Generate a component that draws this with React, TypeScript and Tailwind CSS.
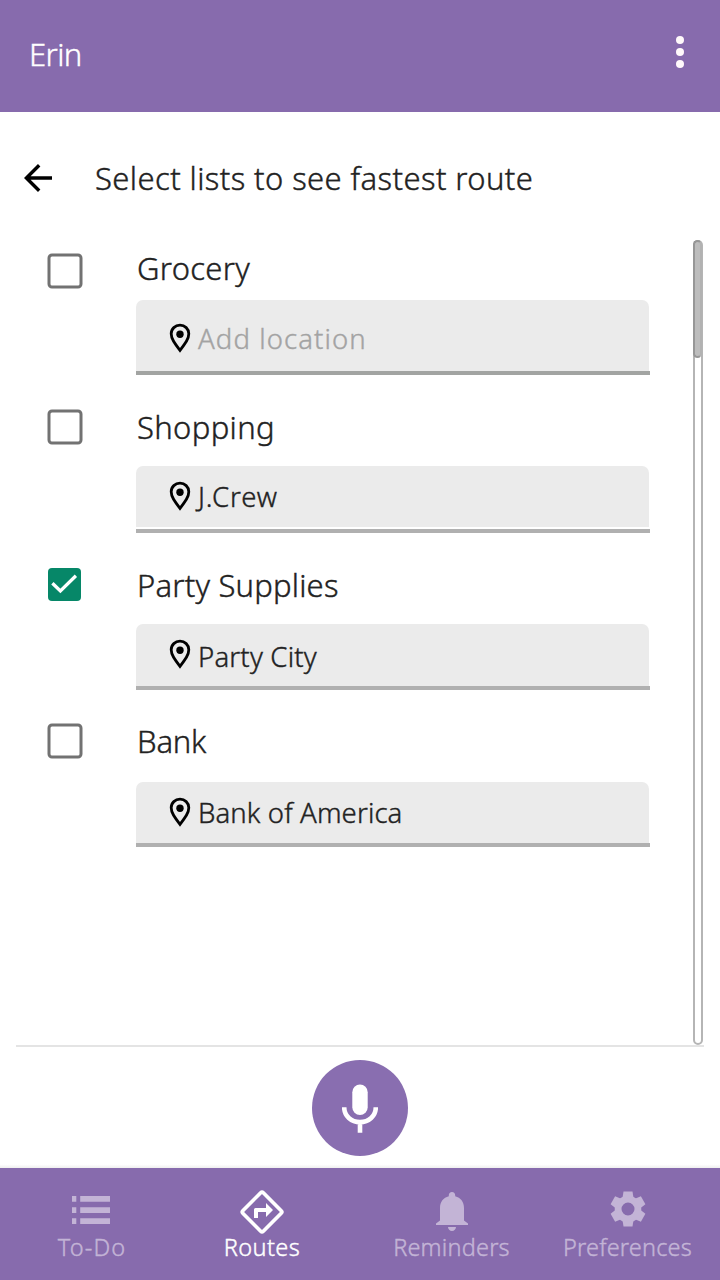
import type { ReactNode } from "react";

type ListItem = {
  name: string;
  nameClass: string;
  place: string;
  placeClass: string;
  checked?: boolean;
  rowClass: string;
  boxClass: string;
  labelClass: string;
  fieldClass: string;
  barClass: string;
};

const items: ListItem[] = [
  {
    name: "Grocery",
    nameClass: "tracking-[0.3px]",
    place: "Add location",
    placeClass: "tracking-[1.1px] text-[#a3a3a3] pt-[2px]",
    rowClass: "h-[158px]",
    boxClass: "pt-[13px]",
    labelClass: "h-[60px] pb-[3px]",
    fieldClass: "h-[71px] pt-[4px]",
    barClass: "bg-[#a2a4a2]",
  },
  {
    name: "Shopping",
    nameClass: "tracking-[0.35px]",
    place: "J.Crew",
    placeClass: "tracking-[0.9px] text-[#222] pt-[2px]",
    rowClass: "h-[158px]",
    boxClass: "pt-[11px]",
    labelClass: "h-[68px] pb-[10px]",
    fieldClass: "h-[61px] mb-[2px] pb-px",
    barClass: "bg-[#b0b0b0]",
  },
  {
    name: "Party Supplies",
    nameClass: "tracking-[0.2px]",
    place: "Party City",
    placeClass: "tracking-[0.2px] text-[#222] pt-[5px]",
    checked: true,
    rowClass: "h-[158px]",
    boxClass: "pt-[11px]",
    labelClass: "h-[68px] pb-[10px]",
    fieldClass: "h-[62px] pb-[2px]",
    barClass: "bg-[#b0b0b0]",
  },
  {
    name: "Bank",
    nameClass: "tracking-[-0.2px]",
    place: "Bank of America",
    placeClass: "tracking-[0.12px] text-[#222] pt-[2px]",
    rowClass: "h-[158px]",
    boxClass: "pt-[9px]",
    labelClass: "h-[68px] pb-[14px]",
    fieldClass: "h-[61px] pb-px",
    barClass: "bg-[#b0b0b0]",
  },
];

function Checkbox({ checked }: { checked?: boolean }) {
  return (
    <svg width="37" height="37" viewBox="0 0 37 37" role="checkbox" aria-checked={!!checked}>
      {checked ? (
        <>
          <rect x="1" y="1" width="33" height="33" rx="4" fill="#068768" />
          <path d="M5.4 16.2L13.4 23.9L28.9 8.8" fill="none" stroke="#fff" strokeWidth="3.3" />
        </>
      ) : (
        <rect x="2" y="2" width="32" height="32" rx="3" fill="#fff" stroke="#727272" strokeWidth="3" />
      )}
    </svg>
  );
}

function Pin() {
  return (
    <svg width="22" height="30" viewBox="0 0 22 30" className="shrink-0">
      <path
        d="M11 2.2C6.2 2.2 2.2 5.8 2.2 10.8C2.2 15.8 5.6 20.3 11 27.4C16.4 20.3 19.8 15.8 19.8 10.8C19.8 5.8 15.8 2.2 11 2.2Z"
        fill="none"
        stroke="#000"
        strokeWidth="2.8"
      />
      <circle cx="11" cy="11.2" r="3.7" />
    </svg>
  );
}

function Row({ item }: { item: ListItem }) {
  return (
    <li className={`flex ${item.rowClass}`}>
      <div className={`w-[89px] shrink-0 ${item.boxClass}`}>
        <Checkbox checked={item.checked} />
      </div>
      <div className="w-[514.4px]">
        <div className={`flex items-center pl-px text-[31px] leading-none text-[#222] ${item.labelClass}`}>
          <span className={item.nameClass}>{item.name}</span>
        </div>
        <div className={`flex w-[513.4px] items-center gap-[7px] rounded-t-[7px] bg-[#ebebeb] pl-[33px] text-[27.5px] leading-none ${item.fieldClass}`}>
          <Pin />
          <span className={item.placeClass}>{item.place}</span>
        </div>
        <div className={`h-[4px] ${item.barClass}`} />
      </div>
    </li>
  );
}

function ListIcon() {
  return (
    <svg width="38" height="28" viewBox="0 0 38 28" fill="currentColor">
      <path d="M0 0h4.3v5.7H0zM8.2 0H38v5.7H8.2zM0 11.2h4.3v5.7H0zM8.2 11.2H38v5.7H8.2zM0 22.2h4.3v5.8H0zM8.2 22.2H38v5.8H8.2z" />
    </svg>
  );
}

function RouteIcon() {
  return (
    <svg width="44" height="44" viewBox="0 0 44 44">
      <path d="M20.7 2.8Q22 1.5 23.3 2.8L41.2 20.7Q42.5 22 41.2 23.3L23.3 41.2Q22 42.5 20.7 41.2L2.8 23.3Q1.5 22 2.8 20.7Z" fill="none" stroke="currentColor" strokeWidth="3.7" />
      <path d="M14 28V19.5Q14 18 15.5 18H26V13L33 20L26 27V22H18V28Z" fill="currentColor" />
    </svg>
  );
}

function BellIcon() {
  return (
    <svg width="32" height="39" viewBox="0 0 32 39" fill="currentColor">
      <path d="M16 0C14 0 12.8 1.4 12.8 3.2V4.2C7.4 5.6 4 9.8 4 16V28.5L0 31.5V33H32V31.5L28 28.5V16C28 9.8 24.6 5.6 19.2 4.2V3.2C19.2 1.4 18 0 16 0ZM12 35H20C20 37.3 18.2 39 16 39S12 37.3 12 35Z" />
    </svg>
  );
}

const toothAngles = [0, 60, 120, 180, 240, 300];

function GearIcon() {
  return (
    <svg width="36" height="36" viewBox="-18 -18 36 36" fill="currentColor">
      <circle r="9.9" fill="none" stroke="currentColor" strokeWidth="6.8" />
      {toothAngles.map((angle) => (
        <path key={angle} d="M-4.5 -17.5H4.5L5.4 -11.8L3 -8H-3L-5.4 -11.8Z" transform={`rotate(${angle})`} />
      ))}
    </svg>
  );
}

function Tab({ icon, label, className }: { icon: ReactNode; label: string; className: string }) {
  return (
    <a className={`flex flex-col items-center ${className}`}>
      <span className="flex h-[44px] items-center">{icon}</span>
      <span className="whitespace-nowrap text-[23.5px] leading-[26px]">{label}</span>
    </a>
  );
}

export default function App() {
  return (
    <div className="flex h-[1280px] w-[720px] flex-col overflow-hidden bg-white font-['Noto_Sans',sans-serif] font-light [-webkit-text-stroke:0.4px]">
      <header className="flex h-[112px] shrink-0 items-center justify-between bg-[#876bad] pr-[36px] pb-[4px] pl-[28px] text-white">
        <h1 className="pt-px pl-px text-[31px] leading-none font-light tracking-[-0.6px]">Erin</h1>
        <svg width="8" height="32" viewBox="0 0 8 32" fill="#fff9fb" className="-mt-1">
          <circle cx="4" cy="4" r="4" />
          <circle cx="4" cy="16" r="4" />
          <circle cx="4" cy="28" r="4" />
        </svg>
      </header>

      <div className="flex h-[128px] shrink-0 items-center gap-[43px] pt-[4px] pl-[24px]">
        <svg width="28" height="28" viewBox="0 0 28 28" fill="none" stroke="#000" strokeWidth="3.4">
          <path d="M28 14H3M15.2 1.2L2.4 14L15.2 26.8" />
        </svg>
        <h2 className="whitespace-nowrap pt-px text-[31px] leading-none font-light tracking-[0.4px] text-[#222]">Select lists to see fastest route</h2>
      </div>

      <main className="mx-[16px] flex h-[807px] shrink-0 justify-between border-b-2 border-[#e4e4e4]">
        <ul className="flex flex-col pl-[31px]">
          {items.map((item) => (
            <Row key={item.name} item={item} />
          ))}
        </ul>
        <div className="mr-px h-[805px] w-[10.5px] rounded-full border-2 border-[#b5b5b5]">
          <div className="-mt-[2px] -ml-[2px] h-[118px] w-[9.5px] rounded-full border-2 border-[#979797] border-r-[#b2b2b2] bg-[#bdbdbd]" />
        </div>
      </main>

      <div className="flex h-[121px] shrink-0 justify-center bg-linear-to-b from-white from-97% to-[#efefef] pt-[13px]">
        <button className="flex size-[96px] items-center justify-center rounded-full bg-[#896eb0]">
          <svg width="36" height="49" viewBox="0 0 36 49">
            <rect x="10.3" y="0.5" width="15.4" height="30.5" rx="7.7" fill="#fff" />
            <path d="M2.2 23.2C2.2 32 9.2 38.1 18 38.1S33.8 32 33.8 23.2M18 38V48.8" fill="none" stroke="#fff" strokeWidth="4.6" />
          </svg>
        </button>
      </div>

      <nav className="flex h-[112px] shrink-0 bg-[#876bad] pt-[22px] text-[#c3b4d6]">
        <Tab icon={<ListIcon />} label="To-Do" className="w-[184px] tracking-[1.1px] [&>span:first-child]:pr-[2px] [&>span:first-child]:pb-1" />
        <Tab icon={<RouteIcon />} label="Routes" className="w-[156px] tracking-[0.4px] text-white" />
        <Tab icon={<BellIcon />} label="Reminders" className="w-[223px] tracking-[0.2px] [&>span:first-child]:pb-px [&>span:first-child]:pl-px" />
        <Tab icon={<GearIcon />} label="Preferences" className="w-[129px] tracking-[0.2px] [&>span:first-child]:pb-[6px]" />
      </nav>
    </div>
  );
}
